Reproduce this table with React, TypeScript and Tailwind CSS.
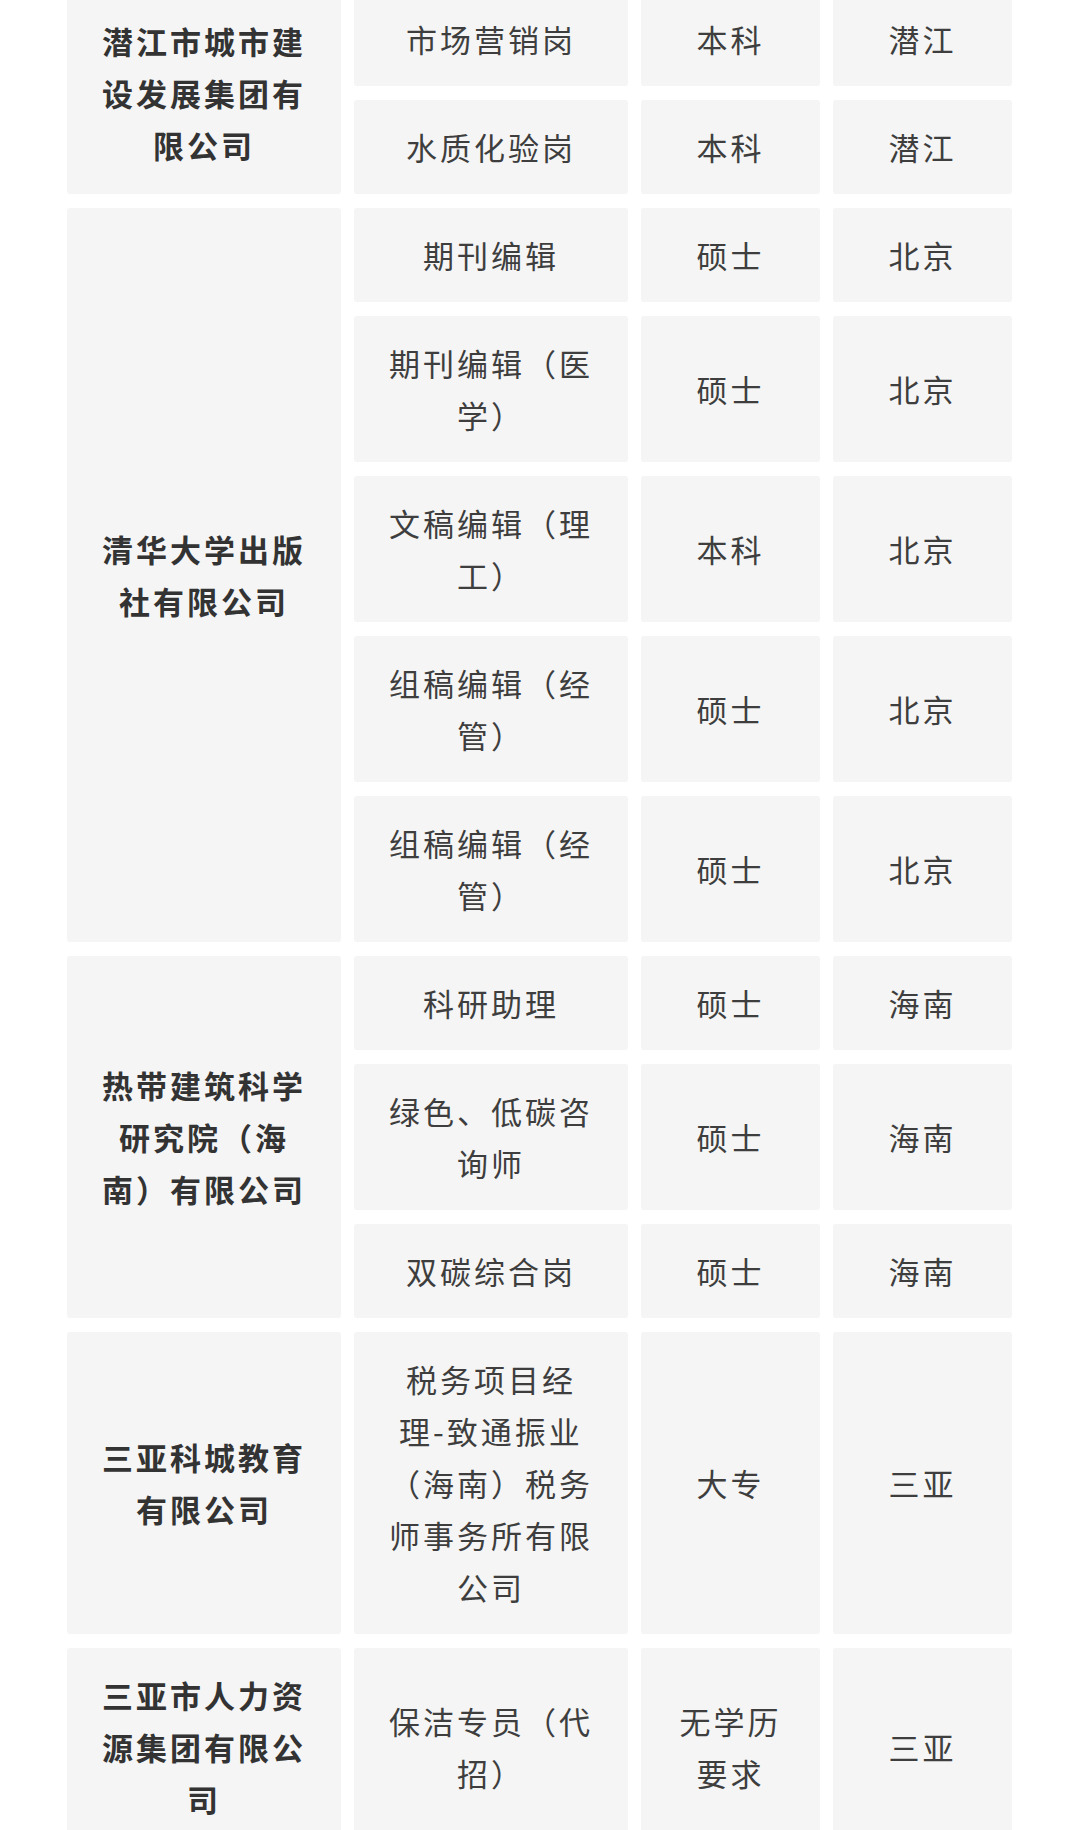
import * as React from "react";

interface Job {
  title: string;
  degree: string;
  place: string;
}

interface Company {
  name: string;
  jobs: Job[];
}

const companies: Company[] = [
  {
    name: "潜江市城市建设发展集团有限公司",
    jobs: [
      { title: "市场营销岗", degree: "本科", place: "潜江" },
      { title: "水质化验岗", degree: "本科", place: "潜江" },
    ],
  },
  {
    name: "清华大学出版社有限公司",
    jobs: [
      { title: "期刊编辑", degree: "硕士", place: "北京" },
      { title: "期刊编辑（医学）", degree: "硕士", place: "北京" },
      { title: "文稿编辑（理工）", degree: "本科", place: "北京" },
      { title: "组稿编辑（经管）", degree: "硕士", place: "北京" },
      { title: "组稿编辑（经管）", degree: "硕士", place: "北京" },
    ],
  },
  {
    name: "热带建筑科学研究院（海南）有限公司",
    jobs: [
      { title: "科研助理", degree: "硕士", place: "海南" },
      { title: "绿色、低碳咨询师", degree: "硕士", place: "海南" },
      { title: "双碳综合岗", degree: "硕士", place: "海南" },
    ],
  },
  {
    name: "三亚科城教育有限公司",
    jobs: [
      {
        // word joiner keeps "理-致" together, as in the original
        title: "税务项目经理-\u2060致通振业（海南）税务师事务所有限公司",
        degree: "大专",
        place: "三亚",
      },
    ],
  },
  {
    name: "三亚市人力资源集团有限公司",
    jobs: [{ title: "保洁专员（代招）", degree: "无学历要求", place: "三亚" }],
  },
];

const cell = "bg-[#f5f5f5] rounded-[3px] py-[21px] text-center align-middle";

export default function App() {
  return (
    <div className="min-h-screen bg-white overflow-hidden font-['Noto_Sans_CJK_SC','Noto_Sans',sans-serif] text-[31px] leading-[52px] tracking-[3px] text-[#3e3e3e] [text-spacing-trim:space-all]">
      <table className="ml-[54px] -mt-[22px] w-[971px] table-fixed border-separate border-spacing-x-[13px] border-spacing-y-[14px]">
        <colgroup>
          <col className="w-[274px]" />
          <col className="w-[274px]" />
          <col className="w-[179px]" />
          <col className="w-[179px]" />
        </colgroup>
        <tbody>
          {companies.map((company) =>
            company.jobs.map((job, i) => (
              <tr key={company.name + i}>
                {i === 0 && (
                  <td
                    rowSpan={company.jobs.length}
                    className={`${cell} px-[25px] font-bold text-[#333333]`}
                  >
                    {company.name}
                  </td>
                )}
                <td className={`${cell} px-[25px]`}>{job.title}</td>
                <td className={`${cell} px-[30px]`}>{job.degree}</td>
                <td className={`${cell} px-[30px]`}>{job.place}</td>
              </tr>
            )),
          )}
        </tbody>
      </table>
    </div>
  );
}
